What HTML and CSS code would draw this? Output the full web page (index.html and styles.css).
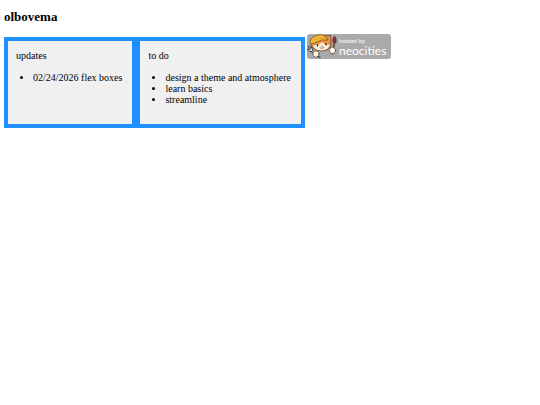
FILE: index.html
```html
<!DOCTYPE html>
<html lang="en">
<head>
<meta charset="utf-8">
<title>olbovema</title>
<link rel="stylesheet" href="styles.css">
</head>
<body>
<h1>olbovema</h1>
<main class="row">
  <div class="boxes">
    <section class="box">
      updates
      <ul>
        <li>02/24/2026 flex boxes</li>
      </ul>
    </section>
    <section class="box">
      to do
      <ul>
        <li>design a theme and atmosphere</li>
        <li>learn basics</li>
        <li>streamline</li>
      </ul>
    </section>
  </div>
  <a class="badge" href="#" aria-label="hosted by neocities">
    <svg class="cat" width="32" height="25" viewBox="0 0 32 25" aria-hidden="true">
      <g stroke-linecap="round" stroke-linejoin="round">
        <path d="M4 8 L6 3 L18 2 L23.500 1.500 L24 8 L24 12 L20 16 L15 17 L9 16 L5 13 Z" fill="#e99245" stroke="#5b351d" stroke-width=".7"/>
        <path d="M13 10 L15 8 L17 10 L23 11 L20 15 L15 16.500 L9 15.500 L6 12 L9 11 Z" fill="#fff3e2"/>
        <path d="M3 9 Q3 4 8 2 Q14 -1 18 2 L21 6 Q14 5 10 8 L4 10 Z" fill="#f4bd35" stroke="#6d4a1b" stroke-width=".7"/>
        <path d="M6 6 Q12 3 18 4" fill="none" stroke="#c98b25" stroke-width=".7"/>
        <path d="M10.500 11 v.8 M19 10 v.8" stroke="#21170f" stroke-width="1.5"/>
        <path d="M14.500 12 h1 M13 14 Q15 15 17 13.500" fill="none" stroke="#754329" stroke-width=".7"/>
        <path d="M2 13 L4 16 L8 20 M1.500 16 L4 17 L5 14" fill="none" stroke="#333" stroke-width="2.4"/>
        <path d="M2 13 L4 16 L8 20 M1.500 16 L4 17 L5 14" fill="none" stroke="#ddd" stroke-width="1"/>
        <circle cx="9" cy="20" r="3.200" fill="#fff9ed" stroke="#4a3728" stroke-width=".7"/>
        <path d="M11 22.500 l2 1" stroke="#333" stroke-width="1.2"/>
        <path d="M27.500 8 L25.500 20" stroke="#593823" stroke-width="1.4"/>
        <path d="M26 8 Q25 5 27.500 2 Q30 5 29 8.500 Z" fill="#a32d31" stroke="#42201e" stroke-width=".6"/>
        <circle cx="25.500" cy="16.500" r="3.200" fill="#fff9ed" stroke="#4a3728" stroke-width=".7"/>
      </g>
    </svg>
    <span class="words"><span class="small">hosted by</span><span class="name">neocities</span></span>
  </a>
</main>
</body>
</html>
```
FILE: styles.css
```css
body {
  margin: 10px 4px;
  background: #fff;
  color: #000;
  font: 10px/11px "Liberation Serif", "Times New Roman", serif;
}

h1 {
  margin: 0 0 10px;
  font-size: 13px;
  line-height: 14px;
}

.row {
  display: flex;
  align-items: flex-start;
  gap: 2px;
}

.boxes {
  display: flex;
  gap: 8px;
  margin-top: 3px;
  padding: 4px;
  background: dodgerblue;
}

.box {
  padding: 9px 10px 8px 8px;
  background: #f0f0f0;
}

ul {
  margin: 11px 0;
  padding-left: 17px;
}

.badge {
  display: flex;
  width: 84px;
  height: 25px;
  border-radius: 3px;
  background: #aaa;
  color: #fff;
  text-decoration: none;
}

.cat {
  flex: none;
}

.words {
  display: flex;
  flex-direction: column;
  padding-top: 3px;
  font-family: Lato, sans-serif;
}

.small {
  font-size: 6px;
  line-height: 8px;
}

.name {
  font-size: 12px;
  line-height: 11px;
}
```
